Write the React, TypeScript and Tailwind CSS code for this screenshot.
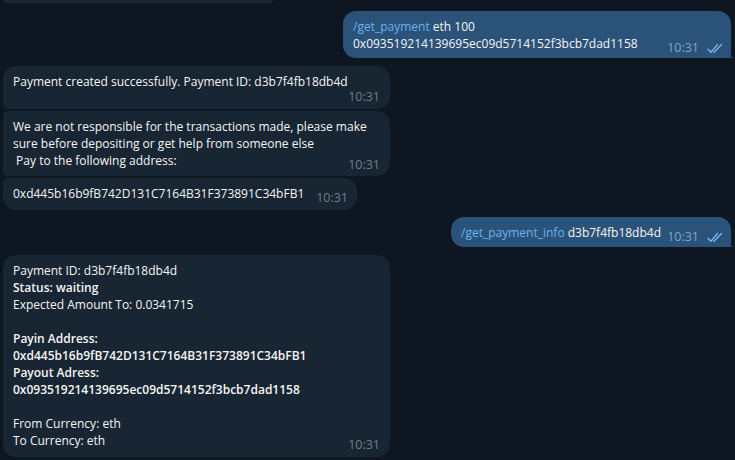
import type { ReactNode } from "react";

const DoubleCheck = () => (
  <svg width="17" height="11" viewBox="0 0 17 11" fill="none" className="text-[#72bcfd]">
    <path d="M1 6.2 L4 9.2 L10.5 1.5" stroke="currentColor" strokeWidth="1.3" strokeLinecap="round" strokeLinejoin="round" />
    <path d="M6.5 9.2 L7 9.2 L14.5 1.5" stroke="currentColor" strokeWidth="1.3" strokeLinecap="round" strokeLinejoin="round" />
  </svg>
);

const InTime = () => (
  <span className="shrink-0 translate-y-[3px] text-[12.5px] leading-[14px] text-[#6d7f8f]">10:31</span>
);

const OutMeta = () => (
  <span className="flex shrink-0 translate-y-[3px] items-center gap-[8px] leading-[14px]">
    <span className="text-[12.5px] text-[#7da8d3]">10:31</span>
    <DoubleCheck />
  </span>
);

const Cmd = ({ children }: { children: ReactNode }) => (
  <span className="text-[#6ab3f3]">{children}</span>
);

function OutBubble({ width, children }: { width: string; children: ReactNode }) {
  return (
    <div className={`relative mr-[4px] self-end rounded-[13px] rounded-br-[4px] bg-[#2b5278] pt-[7px] pr-[7px] pb-[6px] pl-[10px] ${width}`}>
      {children}
      {/* tail */}
      <svg width="6" height="9" viewBox="0 0 6 9" className="absolute -right-[3px] bottom-0 text-[#2b5278]">
        <path d="M0 0 C0 5 2 8 6 9 L0 9 Z" fill="currentColor" />
      </svg>
    </div>
  );
}

export default function App() {
  return (
    <div
      className="flex h-[460px] w-[735px] flex-col overflow-hidden whitespace-nowrap bg-[#0e1621] text-[12px] leading-[17px] text-[#f5f5f5]"
      style={{ fontFamily: '"Open Sans", "Liberation Sans", sans-serif' }}
    >
      {/* tail end of an earlier message */}
      <div className="ml-[3px] h-[3px] w-[270px] shrink-0 rounded-b-[10px] bg-[#182533]" />

      <div className="mt-[8px] flex shrink-0 flex-col">
        <OutBubble width="w-[388px]">
          <p>
            <Cmd>/get_payment</Cmd> eth 100
          </p>
          <div className="flex items-end justify-between">
            <span>0x093519214139695ec09d5714152f3bcb7dad1158</span>
            <OutMeta />
          </div>
        </OutBubble>
      </div>

      {/* incoming group */}
      <div className="mt-[8px] ml-[3px] flex shrink-0 flex-col gap-[2px]">
        <div className="w-[387px] rounded-[13px] rounded-bl-[5px] bg-[#182533] pt-[7px] pr-[10px] pb-[5px] pl-[10px]">
          <p>Payment created successfully. Payment ID: d3b7f4fb18db4d</p>
          <div className="flex h-[14px] justify-end">
            <span className="text-[12.5px] leading-[14px] text-[#6d7f8f]">10:31</span>
          </div>
        </div>

        <div className="w-[387px] rounded-[13px] rounded-l-[5px] bg-[#182533] pt-[7px] pr-[10px] pb-[7px] pl-[10px]">
          <p>We are not responsible for the transactions made, please make</p>
          <p>sure before depositing or get help from someone else</p>
          <div className="flex items-end justify-between">
            <span className="whitespace-pre"> Pay to the following address:</span>
            <InTime />
          </div>
        </div>

        <div className="flex w-[354px] items-end justify-between rounded-[13px] rounded-tl-[5px] bg-[#182533] pt-[7px] pr-[9px] pb-[8px] pl-[10px]">
          <span>0xd445b16b9fB742D131C7164B31F373891C34bFB1</span>
          <InTime />
        </div>
      </div>

      <div className="mt-[7px] flex shrink-0 flex-col">
        <OutBubble width="w-[280px]">
          <div className="flex items-end justify-between">
            <span>
              <Cmd>/get_payment_info</Cmd> d3b7f4fb18db4d
            </span>
            <OutMeta />
          </div>
        </OutBubble>
      </div>

      {/* payment info */}
      <div className="mt-[8px] ml-[3px] w-[387px] shrink-0 rounded-[13px] bg-[#182533] pt-[7px] pr-[10px] pb-[8px] pl-[10px]">
        <p>Payment ID: d3b7f4fb18db4d</p>
        <p className="font-semibold">Status: waiting</p>
        <p>Expected Amount To: 0.0341715</p>
        <p className="h-[17px]" />
        <p className="font-semibold">Payin Address:</p>
        <p className="font-semibold">0xd445b16b9fB742D131C7164B31F373891C34bFB1</p>
        <p className="font-semibold">Payout Adress:</p>
        <p className="font-semibold">0x093519214139695ec09d5714152f3bcb7dad1158</p>
        <p className="h-[17px]" />
        <p>From Currency: eth</p>
        <div className="flex items-end justify-between">
          <span>To Currency: eth</span>
          <InTime />
        </div>
      </div>
    </div>
  );
}
